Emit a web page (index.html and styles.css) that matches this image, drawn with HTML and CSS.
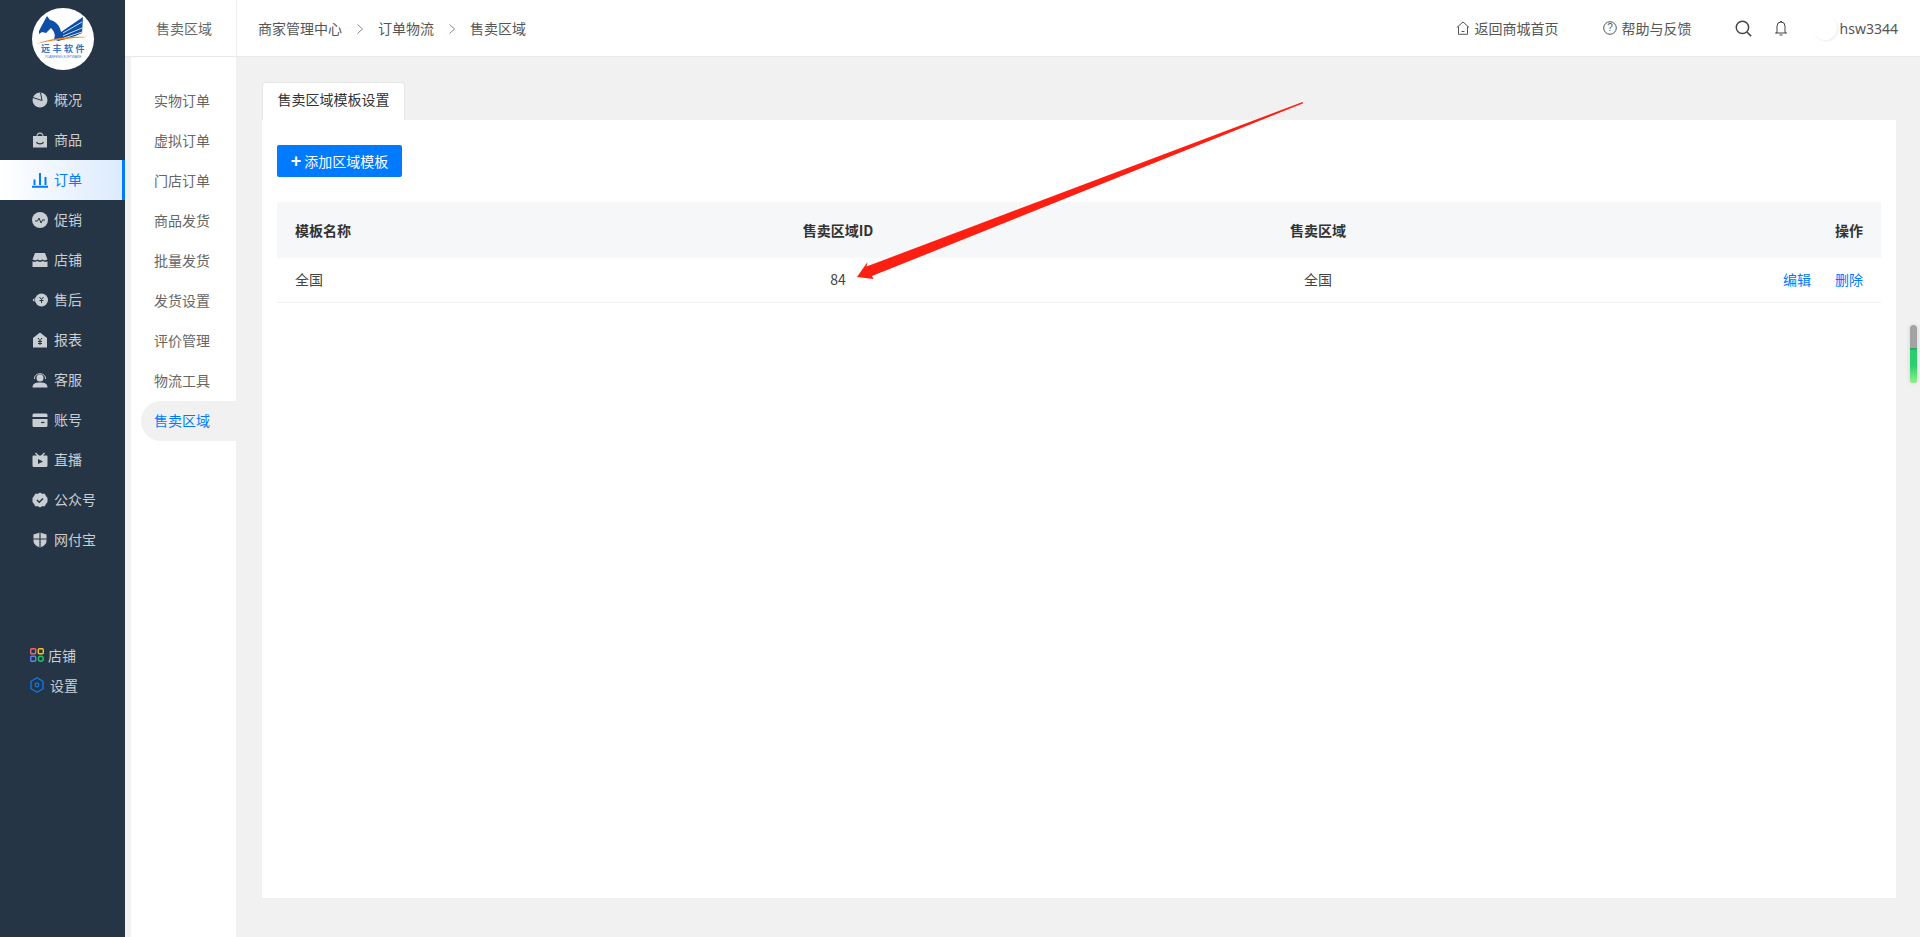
FILE: index.html
```html
<!DOCTYPE html>
<html lang="zh">
<head>
<meta charset="utf-8">
<title>售卖区域</title>
<link rel="stylesheet" href="styles.css">
</head>
<body>
<div class="app">
  <aside class="sidebar">
    <div class="logo-wrap">
      <svg class="logo" viewBox="0 0 62 62">
        <circle cx="31" cy="31" r="31" fill="#fff"/>
        <path d="M7 23l2-4 6-11 3 4c6 1 10 6 11 12L51 9l-1 16c-8 4-16 6-24 8l-4-2c2-4 0-8-3-11l-5 5-4-1-3 2z" fill="#0d4ea6"/>
        <path d="M31 25l19-11M31 28l19-8M32 30l18-6" stroke="#fff" stroke-width=".8"/>
        <path d="M4 36c16-6 33-8 52-7-18 1-35 3-52 7z" fill="#f08a1d"/>
        <text x="32" y="43.500" class="logo-cn" text-anchor="middle">远丰软件</text>
        <text x="31" y="49.500" class="logo-en" text-anchor="middle">YUANFENG SOFTWARE</text>
      </svg>
    </div>
    <nav class="menu">
      <a class="menu-item"><svg class="mi" viewBox="0 0 16 16"><circle cx="8" cy="8" r="7.500" fill="currentColor"/><path d="M8.500 .5L10 8.500 .8 5.500" stroke="#263545" stroke-width="1" fill="none"/></svg><span>概况</span></a>
      <a class="menu-item"><svg class="mi" viewBox="0 0 16 16"><path d="M1 4h3.500c0-2 1.500-3.500 3.500-3.500s3.500 1.500 3.500 3.500H15v11.500H1z" fill="currentColor"/><path d="M4.500 10c1 2.500 6 2.500 7 0" stroke="#263545" stroke-width="1.200" fill="none"/><path d="M5.500 4c0-3 5-3 5 0z" fill="#263545"/></svg><span>商品</span></a>
      <a class="menu-item active"><svg class="mi" viewBox="0 0 16 16"><path d="M0 14.800h16M2.500 13V7.500M8 13V1M13.500 13V5" stroke="currentColor" stroke-width="2" fill="none"/></svg><span>订单</span></a>
      <a class="menu-item"><svg class="mi" viewBox="0 0 16 16"><circle cx="8" cy="8" r="8" fill="currentColor"/><path d="M3 9h2.500l1.500-3 2 5 1.500-3H13" stroke="#263545" stroke-width="1" fill="none"/></svg><span>促销</span></a>
      <a class="menu-item"><svg class="mi" viewBox="0 0 16 16"><path d="M3 1h10l2.500 6.500-3 1-2-1-2.500 1-2.500-1-2 1-3-1z M.5 9.500l2.500.5 2-1 3 1 3-1 2 1 2.500-.5V15H.5z" fill="currentColor"/></svg><span>店铺</span></a>
      <a class="menu-item"><svg class="mi" viewBox="0 0 16 16"><circle cx="9.500" cy="8" r="6.500" fill="currentColor"/><path d="M7.500 5l2 2.500 2-2.500M9.500 7.500V11M7.500 8.500h4" stroke="#263545" stroke-width="1" fill="none"/><path d="M.5 8l2-2v4z" fill="currentColor"/></svg><span>售后</span></a>
      <a class="menu-item"><svg class="mi" viewBox="0 0 16 16"><path d="M1 6l7-5.500L15 6v9.500H1z" fill="currentColor"/><path d="M6 6l2 2.500L10 6M8 8.500V13M6 9.500h4M6 11.500h4" stroke="#263545" stroke-width="1" fill="none"/></svg><span>报表</span></a>
      <a class="menu-item"><svg class="mi" viewBox="0 0 16 16"><circle cx="8" cy="6" r="3.500" fill="currentColor"/><path d="M2.500 7C2 0 14 0 13.500 7" stroke="currentColor" fill="none"/><path d="M.5 15.500c0-4 3-5 7.500-5s7.500 1 7.500 5z" fill="currentColor"/></svg><span>客服</span></a>
      <a class="menu-item"><svg class="mi" viewBox="0 0 16 16"><path d="M2 1.500h12a1.500 1.500 0 0 1 1.500 1.500v2H.5V3A1.500 1.500 0 0 1 2 1.500z M.5 7h15v6.500a1.500 1.500 0 0 1-1.500 1.500H2a1.500 1.500 0 0 1-1.500-1.500z" fill="currentColor"/><path d="M9 10.500h3.500" stroke="#263545" stroke-width="1.200"/></svg><span>账号</span></a>
      <a class="menu-item"><svg class="mi" viewBox="0 0 16 16"><path d="M4 .5l3 3h2l3-3 1 1-2 2h3.500a1 1 0 0 1 1 1v9a1.500 1.500 0 0 1-1.500 1.500H2a1.500 1.500 0 0 1-1.500-1.500v-9a1 1 0 0 1 1-1H5l-2-2z" fill="currentColor"/><path d="M6 7l5 2.500L6 12z" fill="#263545"/></svg><span>直播</span></a>
      <a class="menu-item"><svg class="mi" viewBox="0 0 16 16"><path d="M8 .5l2 1.200 2.800 0 1 2 1.700 2.300v4l-1.700 2.300-1 2H10l-2 1.200-2-1.200H3.200l-1-2L.5 10V6l1.700-2.300 1-2H6z" fill="currentColor"/><path d="M5 8l2.200 2.200L11 6.500" stroke="#263545" stroke-width="1.500" fill="none"/></svg><span>公众号</span></a>
      <a class="menu-item"><svg class="mi" viewBox="0 0 16 16"><path d="M8 .5l6.500 2v6.500c0 3-3 5.500-6.500 6.500-3.500-1-6.500-3.500-6.500-6.500V2.500z" fill="currentColor"/><path d="M8 .5v15M1.500 7h13" stroke="#263545" stroke-width="1.200"/></svg><span>网付宝</span></a>
    </nav>
    <div class="side-links">
      <a class="side-link"><svg class="sl" viewBox="0 0 14 14"><rect x=".7" y=".7" width="5" height="5" rx="1" fill="none" stroke="#f4646c" stroke-width="1.400"/><rect x="8.300" y=".7" width="5" height="5" rx="1" fill="none" stroke="#f8c51c" stroke-width="1.400"/><rect x=".7" y="8.300" width="5" height="5" rx="1" fill="none" stroke="#5d87e8" stroke-width="1.400"/><circle cx="10.800" cy="10.800" r="2.500" fill="none" stroke="#1cc464" stroke-width="1.400"/></svg><span>店铺</span></a>
      <a class="side-link second"><svg class="sl tall" viewBox="0 0 14 16"><path d="M7 .8l6 3.500v7.400l-6 3.500-6-3.500V4.300z" fill="none" stroke="#0a7df0" stroke-width="1.300"/><circle cx="7" cy="8" r="1.800" fill="none" stroke="#0a7df0" stroke-width="1.200"/></svg><span>设置</span></a>
    </div>
  </aside>
  <div class="right">
    <header class="topbar">
      <div class="top-title">售卖区域</div>
      <div class="crumbs">
        <span>商家管理中心</span>
        <svg class="chev" viewBox="0 0 6 10"><path d="M.5.5L5.500 5 .5 9.500" fill="none" stroke="#888"/></svg>
        <span>订单物流</span>
        <svg class="chev" viewBox="0 0 6 10"><path d="M.5.5L5.500 5 .5 9.500" fill="none" stroke="#888"/></svg>
        <span>售卖区域</span>
      </div>
      <div class="top-actions">
        <a class="act home"><svg class="ti" viewBox="0 0 14 14"><path d="M.8 6.500L7 1l6.200 5.500M2.500 5.500v7.800h9V5.500M5.500 10.500h3" fill="none" stroke="#555" stroke-width="1"/></svg>返回商城首页</a>
        <a class="act help"><svg class="ti" viewBox="0 0 14 14"><circle cx="7" cy="7" r="6.300" fill="none" stroke="#555" stroke-width="1"/><text x="7" y="10" class="q" text-anchor="middle">?</text></svg>帮助与反馈</a>
        <svg class="search" viewBox="0 0 16 16"><circle cx="7" cy="7" r="5.800" fill="none" stroke="#444" stroke-width="1.400"/><path d="M11 11l4.200 4.200" stroke="#444" stroke-width="1.400"/></svg>
        <svg class="bell" viewBox="0 0 12 16"><path d="M2 12.500V6a4 4 0 0 1 8 0v6.500l1.500.5H.5zM5 1.500h2M4.500 15h3" fill="none" stroke="#444" stroke-width="1"/></svg>
        <span class="avatar"></span>
        <span class="user">hsw3344</span>
      </div>
    </header>
    <div class="body">
      <nav class="submenu">
        <a class="sub-item">实物订单</a>
        <a class="sub-item">虚拟订单</a>
        <a class="sub-item">门店订单</a>
        <a class="sub-item">商品发货</a>
        <a class="sub-item">批量发货</a>
        <a class="sub-item">发货设置</a>
        <a class="sub-item">评价管理</a>
        <a class="sub-item">物流工具</a>
        <a class="sub-item active">售卖区域</a>
      </nav>
      <main class="main">
        <div class="tab">售卖区域模板设置</div>
        <section class="card">
          <button class="btn"><span class="plus">+</span>添加区域模板</button>
          <div class="table">
            <div class="tr th">
              <div>模板名称</div><div class="c">售卖区域ID</div><div class="c">售卖区域</div><div class="r">操作</div>
            </div>
            <div class="tr td">
              <div>全国</div><div class="c">84</div><div class="c">全国</div>
              <div class="r ops"><a>编辑</a><a>删除</a></div>
            </div>
          </div>
        </section>
      </main>
    </div>
  </div>
</div>
<svg class="arrow" viewBox="0 0 1920 937"><polygon points="1302.500,102 1303.200,103.200 872,276 873.500,279 857,277 867.500,262 866.500,266.500" fill="#ff1f12"/></svg>
<div class="scroll-widget"><div class="sw-fill"></div></div>
</body>
</html>
```
FILE: styles.css
```css
* { box-sizing: border-box; }
html, body { margin: 0; height: 937px; overflow: hidden; }
body {
  font-family: "Noto Sans CJK SC", "Noto Sans", sans-serif;
  font-size: 14px;
  color: #333;
  background: #f1f1f1;
}
a { color: inherit; text-decoration: none; }
.app { display: flex; height: 937px; }

/* Sidebar */
.sidebar { width: 125px; flex: none; background: #263545; color: #c9ced3; }
.logo-wrap { height: 80px; padding-top: 8px; display: flex; justify-content: center; }
.logo { width: 62px; height: 62px; }
.logo-cn { font-size: 9px; font-weight: 700; letter-spacing: 2.500px; fill: #3d72c4; font-family: "Noto Sans CJK SC", sans-serif; }
.logo-en { font-size: 3.200px; fill: #3d72c4; font-family: "Liberation Sans", sans-serif; }
.menu-item {
  height: 40px;
  display: flex;
  align-items: center;
  padding-left: 32px;
  line-height: 20px;
}
.menu-item span { margin-top: -2px; }
.mi { width: 16px; height: 16px; margin-right: 6px; flex: none; }
.menu-item.active {
  color: #007aff;
  background: linear-gradient(90deg, #fff 0%, #dcebfd 100%);
  border-right: 3px solid #007aff;
}
.side-links { margin-top: 85px; padding-left: 30px; }
.side-link { display: flex; align-items: center; height: 20px; line-height: 20px; }
.side-link span { margin-top: -1px; }
.side-link.second { margin-top: 10px; }
.sl { width: 14px; height: 14px; margin-right: 4px; flex: none; }
.sl.tall { height: 16px; margin-right: 6px; }

/* Right column */
.right { flex: 1; min-width: 0; display: flex; flex-direction: column; }
.topbar {
  height: 57px;
  flex: none;
  background: #fff;
  border-bottom: 1px solid #e9e9e9;
  display: flex;
  align-items: center;
}
.top-title {
  width: 112px;
  height: 56px;
  flex: none;
  line-height: 56px;
  text-align: center;
  color: #666;
  padding-left: 7px;
  border-right: 1px solid #eee;
}
.crumbs { display: flex; align-items: center; padding-left: 21px; color: #555; }
.chev { width: 6px; height: 10px; margin: 1px 15px 0 15px; }
.top-actions { margin-left: auto; display: flex; align-items: center; color: #555; padding-right: 22px; }
.act { display: flex; align-items: center; }
.ti { width: 14px; height: 14px; margin-right: 5px; flex: none; }
.q { font-size: 10px; fill: #555; font-family: "Liberation Sans", sans-serif; }
.help { margin-left: 44px; }
.search { width: 17px; height: 17px; margin-left: 43px; }
.bell { width: 12px; height: 16px; margin-left: 23px; }
.avatar {
  width: 24px;
  height: 24px;
  margin-left: 26px;
  border-radius: 50%;
  background: #fff;
  box-shadow: 1px 1px 2px rgba(0, 0, 0, .08);
}
.user { margin-left: 3px; font-family: "Noto Sans", sans-serif; }

/* Body */
.body { flex: 1; min-height: 0; display: flex; }
.submenu {
  width: 105px;
  flex: none;
  margin-left: 6px;
  padding: 24px 0 0 10px;
  background: #fff;
  color: #666;
}
.sub-item {
  display: block;
  height: 40px;
  line-height: 38px;
  padding-left: 13px;
  border-radius: 20px 0 0 20px;
}
.sub-item.active { background: #f1f1f1; color: #007aff; }
.main { flex: 1; min-width: 0; padding: 25px 24px 39px 26px; display: flex; flex-direction: column; align-items: flex-start; }
.tab {
  width: 143px;
  height: 38px;
  line-height: 33px;
  text-align: center;
  background: #fff;
  color: #333;
  border: 1px solid #e6e6e6;
  border-bottom: 0;
  border-radius: 4px 4px 0 0;
}
.card { align-self: stretch; flex: 1; background: #fff; padding: 25px 15px 0; }
.btn {
  display: flex;
  align-items: center;
  justify-content: center;
  width: 125px;
  height: 32px;
  padding: 0;
  border: 0;
  border-radius: 2px;
  background: #007aff;
  color: #fff;
  font: inherit;
}
.plus { font-size: 18px; font-weight: 700; line-height: 20px; margin-right: 3px; font-family: "Liberation Sans", sans-serif; }
.table { margin-top: 25px; }
.tr { display: grid; grid-template-columns: 303px 480px 480px 1fr; align-items: center; padding: 0 18px; }
.th { height: 56px; background: #f6f7f9; font-weight: 700; color: #333; }
.td { height: 45px; border-bottom: 1px solid #f0f0f0; color: #444; padding-bottom: 2px; }
.c { text-align: center; }
.r { text-align: right; }
.ops { display: flex; justify-content: flex-end; gap: 24px; color: #007aff; }

/* Overlays */
.arrow { position: absolute; left: 0; top: 0; width: 1920px; height: 937px; pointer-events: none; }
.scroll-widget {
  position: absolute;
  left: 1910px;
  top: 325px;
  width: 7px;
  height: 58px;
  border-radius: 4px;
  background: #a3a3a3;
  overflow: hidden;
  box-shadow: 0 0 5px rgba(0, 0, 0, .12);
}
.sw-fill { margin-top: 23px; height: 35px; background: linear-gradient(180deg, #1fa35e 0, #2bcf70 8%, #2bcf70 50%, #8cf584 100%); }
```
